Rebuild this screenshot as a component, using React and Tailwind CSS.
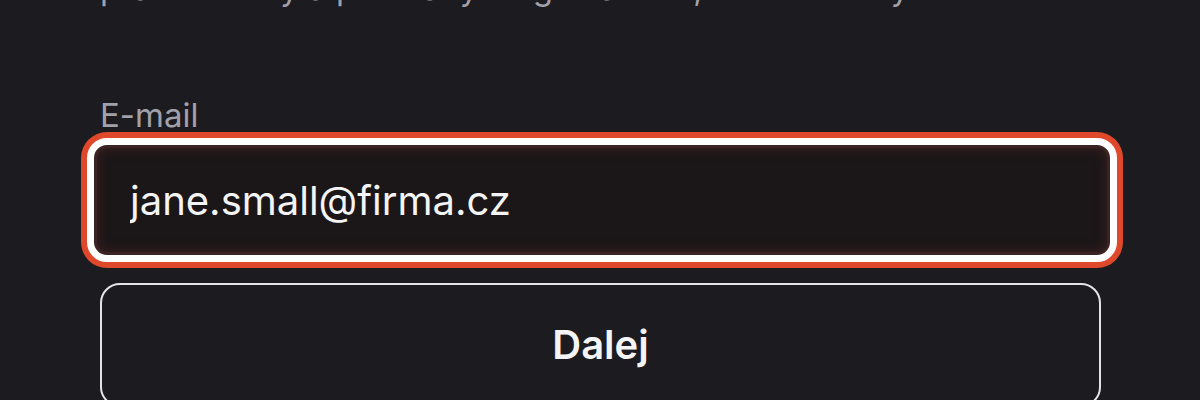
import React from "react";

export default function App() {
  return (
    <div className="min-h-screen w-[1200px] h-[400px] overflow-hidden bg-[#1c1b1f] font-['Inter','Liberation_Sans',sans-serif]">
      <div className="px-[100px]">
        <p className="-mt-[32px] text-[33px] leading-[40px] text-[#a1a1aa] whitespace-nowrap">
          pracowniczy a polecany i logowaniem, w sieci firmy.
        </p>
        <label className="mt-[87px] block text-[33px] leading-[40px] text-[#a1a1aa]">E-mail</label>
        <div className="mt-[3px] -ml-[13px] -mr-[17px]">
          <input
            readOnly
            value="jane.small@firma.cz"
            className="block h-[124px] w-full rounded-[20px] border-[7px] border-white bg-[#1b1618] pl-[36px] text-[40px] text-[#f4f4f5] outline-none ring-[6px] ring-[#e0482b] shadow-[inset_0_0_0_3px_#3a2322,inset_0_0_10px_6px_rgba(70,35,32,0.55)] font-['Inter','Liberation_Sans',sans-serif]"
          />
        </div>
        <button className="mt-[21px] flex h-[124px] w-[1001px] items-center justify-center rounded-[20px] border-2 border-[#e4e4e7] bg-transparent text-[40px] font-semibold text-[#f4f4f5]">
          Dalej
        </button>
      </div>
    </div>
  );
}
